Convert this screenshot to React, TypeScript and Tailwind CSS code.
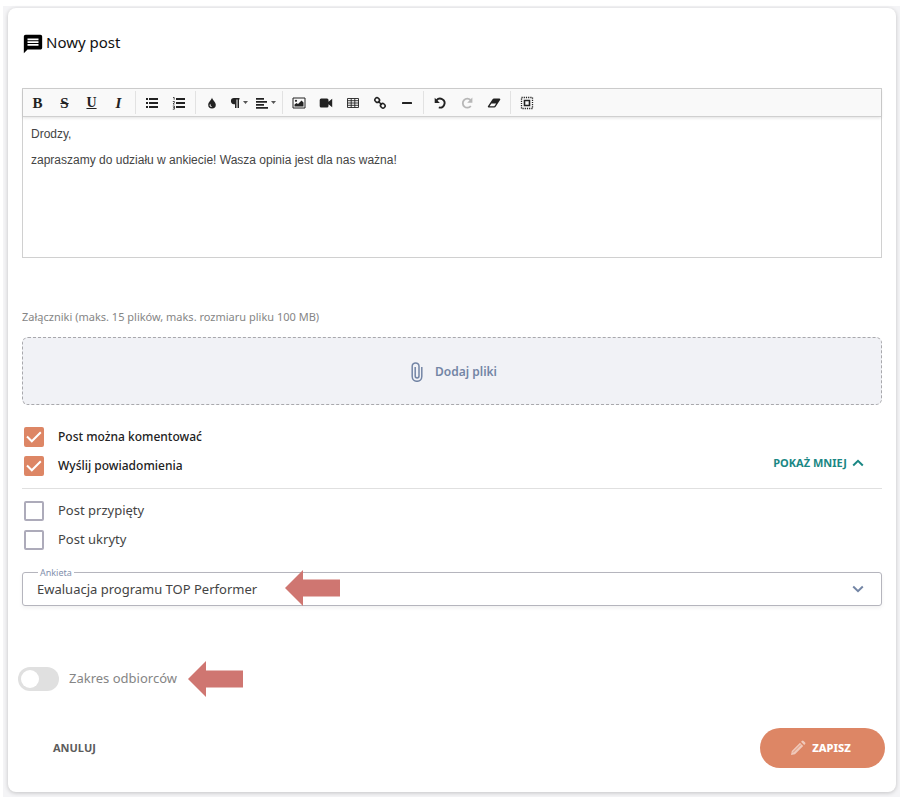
import type { ReactNode } from 'react'
import { MdMessage } from 'react-icons/md'

function ToolButton({ label, disabled, children }: { label: string; disabled?: boolean; children: ReactNode }) {
  return (
    <button
      type="button"
      title={label}
      aria-label={label}
      disabled={disabled}
      className="flex h-[27px] w-[27px] items-center justify-center text-[#222] disabled:opacity-30"
    >
      {children}
    </button>
  )
}

function Separator() {
  return <span className="mr-[2px] ml-[3px] h-[23px] w-px bg-[#e2e2e2]" />
}

function Glyph({ children }: { children: ReactNode }) {
  return (
    <svg viewBox="0 0 16 16" className="h-4 w-4 shrink-0" fill="currentColor" aria-hidden="true">
      {children}
    </svg>
  )
}

// Small triangle next to the buttons that open a menu
function Caret() {
  return (
    <svg viewBox="0 0 5 3" className="ml-[3px] h-[3px] w-[5px] shrink-0" fill="#555" aria-hidden="true">
      <path d="M0 0h5L2.500 3z" />
    </svg>
  )
}

function Toolbar() {
  return (
    <div role="toolbar" className="flex h-[28px] items-center border-b border-[#d0d0d0] bg-[#f9f9f9] pl-px shadow-[0_1px_3px_rgba(0,0,0,0.12)]">
      <ToolButton label="Pogrubienie">
        <span className="font-['Liberation_Serif',serif] text-[15px] leading-4 font-bold">B</span>
      </ToolButton>
      <ToolButton label="Przekreślenie">
        <span className="font-['Liberation_Serif',serif] text-[15px] leading-4 font-bold line-through decoration-1">S</span>
      </ToolButton>
      <ToolButton label="Podkreślenie">
        <span className="font-['Liberation_Serif',serif] text-[14px] leading-4 font-bold underline decoration-1">U</span>
      </ToolButton>
      <ToolButton label="Kursywa">
        <span className="font-['Liberation_Serif',serif] text-[15px] leading-4 font-bold italic">I</span>
      </ToolButton>
      <Separator />
      <ToolButton label="Lista nieuporządkowana">
        <Glyph>
          <path d="M2 3h2v2H2zM2 7h2v2H2zM2 11h2v2H2zM5 3h9v2H5zM5 7h9v2H5zM5 11h9v2H5z" />
        </Glyph>
      </ToolButton>
      <ToolButton label="Lista uporządkowana">
        <Glyph>
          <path d="M5 3h9v2H5zM5 7h9v2H5zM5 11h9v2H5z" />
          <path d="M2 2.500h1.200v2.200M1.800 6.500h1.600v1L2 9h1.600M1.800 11h1.600v3.200H1.800M2.200 12.600h1.200" fill="none" stroke="currentColor" strokeWidth=".8" />
        </Glyph>
      </ToolButton>
      <Separator />
      <ToolButton label="Kolor tekstu">
        <Glyph>
          <path fillRule="evenodd" d="M8 2.500C7.600 5 4.200 7 4.200 9.800a3.800 3.800 0 0 0 7.600 0C11.800 7 8.400 5 8 2.500zM6.600 8.800c-.6 1.400.2 2.600 1.600 2.700-1 .9-2.700.1-2.600-1.400 0-.6.5-1 1-1.300z" />
        </Glyph>
      </ToolButton>
      <ToolButton label="Formatowanie">
        <svg viewBox="0 0 10 12" className="h-3 w-[10px] shrink-0" fill="currentColor" aria-hidden="true">
          <path d="M4 1h5.500v1.400H9V11H7.500V2.400H6.500V11H5V7.200H4A3.100 3.100 0 0 1 4 1z" />
        </svg>
        <Caret />
      </ToolButton>
      <ToolButton label="Wyrównanie">
        <svg viewBox="0 0 12 12" className="h-3 w-3 shrink-0" fill="currentColor" aria-hidden="true">
          <path d="M0 1h8v1.700H0zM0 4h11v1.700H0zM0 7h8v1.700H0zM0 10h12v1.700H0z" />
        </svg>
        <Caret />
      </ToolButton>
      <Separator />
      <ToolButton label="Wstaw obraz">
        <Glyph>
          <path d="M2 3h12v10H2z" fill="none" stroke="currentColor" strokeWidth="1" />
          <path d="M3.500 11.500V9.500l2-1.500 1.500 1 3.500-3.500 2 2v4z" />
          <circle cx="5" cy="5.800" r="1.100" />
        </Glyph>
      </ToolButton>
      <ToolButton label="Wstaw wideo">
        <Glyph>
          <path d="M3.200 3.500H9a1.500 1.500 0 0 1 1.500 1.500v1.700L14.200 3.700v8.600l-3.700-3V11A1.500 1.500 0 0 1 9 12.500H3.200A1.500 1.500 0 0 1 1.700 11V5a1.500 1.500 0 0 1 1.500-1.500z" />
        </Glyph>
      </ToolButton>
      <ToolButton label="Wstaw tabelę">
        <Glyph>
          <path d="M2.500 3.500h11v9h-11zM2.500 5.700h11M2.500 8h11M2.500 10.300h11M6.200 3.500v9M9.800 3.500v9" fill="none" stroke="currentColor" strokeWidth=".9" />
        </Glyph>
      </ToolButton>
      <ToolButton label="Wstaw link">
        <Glyph>
          <g fill="none" stroke="currentColor" strokeWidth="1.500">
            <rect x="2.800" y="3" width="4.800" height="4.200" rx="2" transform="rotate(45 5.200 5.100)" />
            <rect x="8.400" y="8.600" width="4.800" height="4.200" rx="2" transform="rotate(45 10.800 10.700)" />
            <path d="M6 6l4 4" />
          </g>
        </Glyph>
      </ToolButton>
      <ToolButton label="Linia pozioma">
        <Glyph>
          <rect x="3" y="7" width="10" height="2" rx=".5" />
        </Glyph>
      </ToolButton>
      <Separator />
      <ToolButton label="Cofnij">
        <Glyph>
          <path d="M4.500 5.300A4.500 4.500 0 1 1 6.800 12.400" fill="none" stroke="currentColor" strokeWidth="1.900" />
          <path d="M2.700 2.800v5.200h5.200z" />
        </Glyph>
      </ToolButton>
      <ToolButton label="Ponów" disabled>
        <Glyph>
          <path d="M11.500 5a4.500 4.500 0 1 0 .3 6" fill="none" stroke="currentColor" strokeWidth="1.800" />
          <path d="M13.400 2.600v5.200H8.200z" />
        </Glyph>
      </ToolButton>
      <ToolButton label="Wyczyść formatowanie">
        <Glyph>
          <path fillRule="evenodd" d="M8 3.500h5.500a.8.800 0 0 1 .7 1.200L9.800 11.500a2 2 0 0 1-1.600 1H2.600a.8.800 0 0 1-.7-1.200L6.400 4.500A2 2 0 0 1 8 3.500zM5.400 8.500L3.500 11.300h4.800l1.900-2.800z" />
        </Glyph>
      </ToolButton>
      <Separator />
      <ToolButton label="Zaznacz wszystko">
        <Glyph>
          <path d="M2.500 2.500h11v11h-11z" fill="none" stroke="currentColor" strokeWidth="1.300" strokeDasharray="1.200 1" />
          <path d="M5.500 5.500h5v5h-5z" fill="none" stroke="currentColor" strokeWidth="1.600" />
        </Glyph>
      </ToolButton>
    </div>
  )
}

function CheckRow({ label, checked }: { label: string; checked?: boolean }) {
  return (
    <label className={`flex h-5 items-center gap-[14px] ${checked ? 'text-[12px] font-medium text-[#222]' : 'text-[13px] text-[#444]'}`}>
      <span className="grid">
        <input
          type="checkbox"
          defaultChecked={checked}
          className="peer col-start-1 row-start-1 h-5 w-5 appearance-none rounded-[2px] border-2 border-[#adabba] bg-white checked:border-[#dd8665] checked:bg-[#dd8665]"
        />
        <svg
          viewBox="0 0 20 20"
          className="pointer-events-none col-start-1 row-start-1 hidden h-5 w-5 peer-checked:block"
          fill="none"
          stroke="white"
          strokeWidth="2"
          aria-hidden="true"
        >
          <path d="M3 9.500l4.800 4.800 9-9" />
        </svg>
      </span>
      {label}
    </label>
  )
}

function Arrow({ className = '' }: { className?: string }) {
  return (
    <svg viewBox="0 0 55 36" className={`h-9 w-[55px] ${className}`} fill="#cf7671" aria-hidden="true">
      <path d="M0 18L18 0v9.500h37v17H18V36z" />
    </svg>
  )
}

function Chevron({ up, className = '' }: { up?: boolean; className?: string }) {
  return (
    <svg viewBox="0 0 12 8" className={`h-2 w-3 ${className}`} fill="none" stroke="currentColor" strokeWidth="2" aria-hidden="true">
      <path d={up ? 'M1.200 6.500L6 1.800l4.800 4.700' : 'M1.200 1.500L6 6.200l4.800-4.700'} />
    </svg>
  )
}

export default function App() {
  return (
    <main className="bg-white pt-[6px] pr-[5px] pb-[2px] pl-[3px] font-['Noto_Sans',sans-serif]">
      <div className="bg-[#f4f4f6] pt-[2px] pr-1 pb-[5px] pl-[5px]">
        <form className="rounded-lg bg-white px-[14px] pt-6 pb-6 shadow-[0_1px_4px_rgba(0,0,0,0.2)]">
          <header className="flex h-5 items-center gap-[2px] text-black">
            <MdMessage className="mt-[3px] h-[22px] w-[22px]" />
            <h1 className="text-[15px] text-[#111]">Nowy post</h1>
          </header>

          <div className="mt-9 border border-[#d0d0d0]">
            <Toolbar />
            <textarea
              aria-label="Treść posta"
              className="block h-[140px] w-full resize-none px-2 pt-[11px] font-['Liberation_Sans',sans-serif] text-[12px] leading-[13px] text-[#444] outline-none"
              defaultValue={'Drodzy,\n\nzapraszamy do udziału w ankiecie! Wasza opinia jest dla nas ważna!'}
            />
          </div>

          <p id="attachments" className="mt-[51px] text-[11px] leading-4 text-[#858585]">
            Załączniki (maks. 15 plików, maks. rozmiaru pliku 100 MB)
          </p>
          <button
            type="button"
            aria-describedby="attachments"
            className="mt-3 flex h-[68px] w-full items-center justify-center gap-3 rounded-md border border-dashed border-[#a8a8ac] bg-[#f1f2f6] pt-[2px] pl-1 text-[12px] font-semibold text-[#7385a5]"
          >
            <svg viewBox="0 0 12 20" className="h-5 w-3" fill="none" stroke="currentColor" strokeWidth="1.500" aria-hidden="true">
              <path d="M10.800 5v9.500a4.800 4.800 0 0 1-9.600 0V4.300a3.300 3.300 0 0 1 6.800 0v9.700a1.900 1.900 0 0 1-3.800 0V5" />
            </svg>
            Dodaj pliki
          </button>

          <div className="mt-[22px] flex items-end justify-between border-b border-[#e0e0e0] pr-[18px] pb-3 pl-[2px]">
            <div className="flex flex-col gap-[9px]">
              <CheckRow label="Post można komentować" checked />
              <CheckRow label="Wyślij powiadomienia" checked />
            </div>
            <button type="button" className="mb-[5px] flex items-center gap-[5px] text-[11px] leading-4 font-bold text-[#1a8784]">
              POKAŻ MNIEJ
              <Chevron up />
            </button>
          </div>

          <div className="mt-3 flex flex-col gap-[9px] pl-[2px]">
            <CheckRow label="Post przypięty" />
            <CheckRow label="Post ukryty" />
          </div>

          <div className="relative mt-[22px]">
            <label htmlFor="survey" className="absolute -top-[5px] left-4 bg-white px-[2px] text-[9px] leading-3 text-[#8290ad]">
              Ankieta
            </label>
            <select
              id="survey"
              className="block h-[34px] w-full appearance-none rounded-[3px] border border-[#b5b5bd] bg-white px-[14px] pt-[2px] text-[13px] text-[#444] shadow-[0_2px_4px_rgba(0,0,0,0.06)]"
            >
              <option>Ewaluacja programu TOP Performer</option>
            </select>
            <Arrow className="pointer-events-none absolute -top-[2px] left-[263px]" />
            <Chevron className="pointer-events-none absolute top-[13px] right-[18px] text-[#7385a5]" />
          </div>

          <div className="mt-[55px] -ml-1 flex items-center gap-[11px]">
            <label className="flex items-center gap-[10px] text-[13px] text-[#858585]">
              <input
                type="checkbox"
                role="switch"
                className="flex h-6 w-[41px] appearance-none items-center rounded-full bg-[#e0e0e0] px-[3px] before:h-[18px] before:w-[18px] before:rounded-full before:bg-white checked:justify-end checked:bg-[#dd8665]"
              />
              Zakres odbiorców
            </label>
            <Arrow />
          </div>

          <footer className="-mr-[3px] mt-[31px] flex items-center justify-between">
            <button type="button" className="ml-[31px] text-[11px] font-bold text-[#5c5c5c]">
              ANULUJ
            </button>
            <button type="submit" className="flex h-10 w-[125px] items-center justify-center gap-[6px] rounded-full bg-[#dd8665] pr-1 text-[11px] font-extrabold text-white">
              <svg viewBox="0 0 16 16" className="h-4 w-4 opacity-55" fill="currentColor" aria-hidden="true">
                <path d="M1 15l.8-4L10 2.800 13.200 6 5 14.200zM11 1.800l.9-.9a1.200 1.200 0 0 1 1.700 0l1.500 1.500a1.200 1.200 0 0 1 0 1.700l-.9.900z" />
                <path d="M3 12.500L11 4.500" stroke="#dd8665" strokeWidth=".8" />
              </svg>
              ZAPISZ
            </button>
          </footer>
        </form>
      </div>
    </main>
  )
}
